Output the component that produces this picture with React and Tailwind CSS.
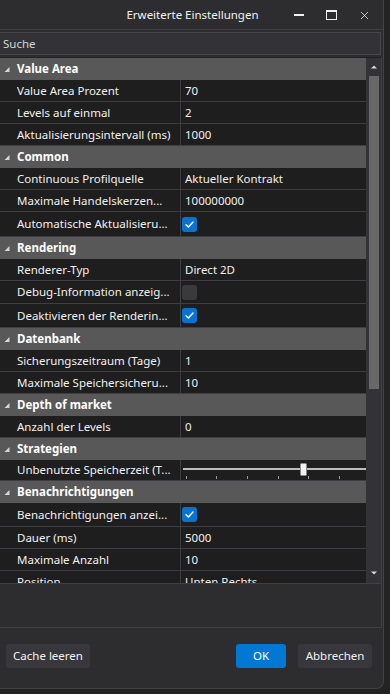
import { X } from "lucide-react";

const groups = [
  {
    title: "Value Area",
    rows: [
      { label: "Value Area Prozent", value: "70" },
      { label: "Levels auf einmal", value: "2" },
      { label: "Aktualisierungsintervall (ms)", value: "1000" },
    ],
  },
  {
    title: "Common",
    rows: [
      { label: "Continuous Profilquelle", value: "Aktueller Kontrakt" },
      { label: "Maximale Handelskerzen...", value: "100000000" },
      { label: "Automatische Aktualisieru...", check: true, h: "h-[25px]" },
    ],
  },
  {
    title: "Rendering",
    rows: [
      { label: "Renderer-Typ", value: "Direct 2D" },
      { label: "Debug-Information anzeig...", check: false, h: "h-[23px]" },
      { label: "Deaktivieren der Renderin...", check: true, h: "h-[24px]" },
    ],
  },
  {
    title: "Datenbank",
    rows: [
      { label: "Sicherungszeitraum (Tage)", value: "1" },
      { label: "Maximale Speichersicheru...", value: "10" },
    ],
  },
  {
    title: "Depth of market",
    rows: [{ label: "Anzahl der Levels", value: "0" }],
  },
  {
    title: "Strategien",
    rows: [{ label: "Unbenutzte Speicherzeit (T...", slider: true, h: "h-[21px]" }],
  },
  {
    title: "Benachrichtigungen",
    rows: [
      { label: "Benachrichtigungen anzei...", check: true, h: "h-[24px]" },
      { label: "Dauer (ms)", value: "5000" },
      { label: "Maximale Anzahl", value: "10" },
      { label: "Position", value: "Unten Rechts" },
    ],
  },
];

function Checkbox({ checked }) {
  if (!checked) {
    return <div className="h-[15px] w-[15px] rounded-[3px] bg-[#3a3a3d]" />;
  }
  return (
    <div className="flex h-[15px] w-[15px] items-center justify-center rounded-[3px] bg-[#0a72d1]">
      <svg width="11" height="11" viewBox="0 0 11 11" fill="none">
        <path d="M2 5.8 L4.4 8 L9 3" stroke="#fff" strokeWidth="1.4" strokeLinecap="round" strokeLinejoin="round" />
      </svg>
    </div>
  );
}

function Slider() {
  const ticks = [4, 34, 65, 96, 126, 157];
  return (
    <svg width="184" height="21" viewBox="0 0 184 21">
      <rect x="1" y="8" width="183" height="2" fill="#bdbdbd" />
      {ticks.map((t) => (
        <rect key={t} x={t} y="16" width="1" height="3" fill="#9a9a9a" />
      ))}
      <rect x="118.5" y="3.5" width="6" height="12" rx="1" fill="#f2f2f2" stroke="#8a8a8a" />
    </svg>
  );
}

function Header({ title }) {
  return (
    <div className="flex h-[22px] items-center bg-[#585858] text-[11.5px] font-bold text-white">
      <svg width="17" height="22" viewBox="0 0 17 22" className="shrink-0">
        <polygon points="9.5,9 9.5,14 4.5,14" fill="#d6d6d6" />
      </svg>
      <span>{title}</span>
    </div>
  );
}

function Row({ row }) {
  const height = row.h || "h-[22px]";
  return (
    <div className={`flex border-b border-[#3e3e42] bg-[#1e1e1e] text-[11.5px] text-[#f1f1f1] ${height}`}>
      <div className="flex w-[181px] shrink-0 items-center overflow-hidden whitespace-nowrap border-r border-[#3e3e42] pl-[17px]">
        {row.label}
      </div>
      <div className={`flex flex-1 items-center ${row.value ? "pl-[4px]" : "pl-[1px]"}`}>
        {row.value}
        {row.check !== undefined && <Checkbox checked={row.check} />}
        {row.slider && <Slider />}
      </div>
    </div>
  );
}

export default function App() {
  return (
    <div className="h-[694px] w-[390px] overflow-hidden bg-[#232325]" style={{ fontFamily: '"Noto Sans", "Open Sans", sans-serif' }}>
      <div className="flex h-[689px] w-[384px] flex-col rounded-br-[8px] border-b border-r border-[#434346] bg-[#2d2d30]">
        <div className="relative flex h-[30px] shrink-0 items-center justify-center border-b border-[#3f3f46] text-[11.5px] text-[#f1f1f1]">
          <span className="pl-[2px]">Erweiterte Einstellungen</span>
          <div className="absolute right-[2px] top-0 flex h-[30px] items-center">
            <div className="flex w-[33px] justify-center">
              <div className="h-[2px] w-[10px] bg-[#f1f1f1]" />
            </div>
            <div className="flex w-[33px] justify-center">
              <div className="h-[10px] w-[11px] border border-t-2 border-[#f1f1f1]" />
            </div>
            <div className="flex w-[33px] justify-center">
              <X size={13} strokeWidth={1.4} color="#f1f1f1" />
            </div>
          </div>
        </div>
        <div className="mt-[2px] flex h-[23px] w-[381px] items-center border border-l-0 border-[#46464a] bg-[#333337] pl-[3px] text-[11.5px] text-[#d4d4d4]">
          Suche
        </div>
        <div className="mt-[2px] flex h-[571px] w-[382px] flex-col border-b border-r border-t border-[#3f3f46] border-t-[#222224]">
          <div className="flex h-[526px] border-b border-[#3f3f46]">
            <div className="w-[366px] overflow-hidden">
              {groups.map((g) => (
                <div key={g.title}>
                  <Header title={g.title} />
                  {g.rows.map((r) => (
                    <Row key={r.label} row={r} />
                  ))}
                </div>
              ))}
            </div>
            <div className="flex w-[15px] flex-col items-center bg-[#333337]">
              <svg width="8" height="18" viewBox="0 0 8 18" className="shrink-0">
                <polygon points="1,10.5 7,10.5 4,7.5" fill="#d8d8d8" />
              </svg>
              <div className="h-[313px] w-[10px] bg-[#686868]" />
              <div className="flex-1" />
              <svg width="8" height="18" viewBox="0 0 8 18" className="shrink-0">
                <polygon points="1,6.5 7,6.5 4,9.5" fill="#d8d8d8" />
              </svg>
            </div>
          </div>
        </div>
        <div className="flex flex-1 items-start px-[6px] pt-[16px] text-[11.5px] text-[#f1f1f1]">
          <button className="h-[24px] w-[84px] rounded-[3px] bg-[#38383c]">Cache leeren</button>
          <div className="flex-1" />
          <button className="h-[24px] w-[50px] rounded-[3px] bg-[#0078d4] text-white">OK</button>
          <button className="ml-[12px] mr-[5px] h-[24px] w-[74px] rounded-[3px] bg-[#38383c]">Abbrechen</button>
        </div>
      </div>
    </div>
  );
}
